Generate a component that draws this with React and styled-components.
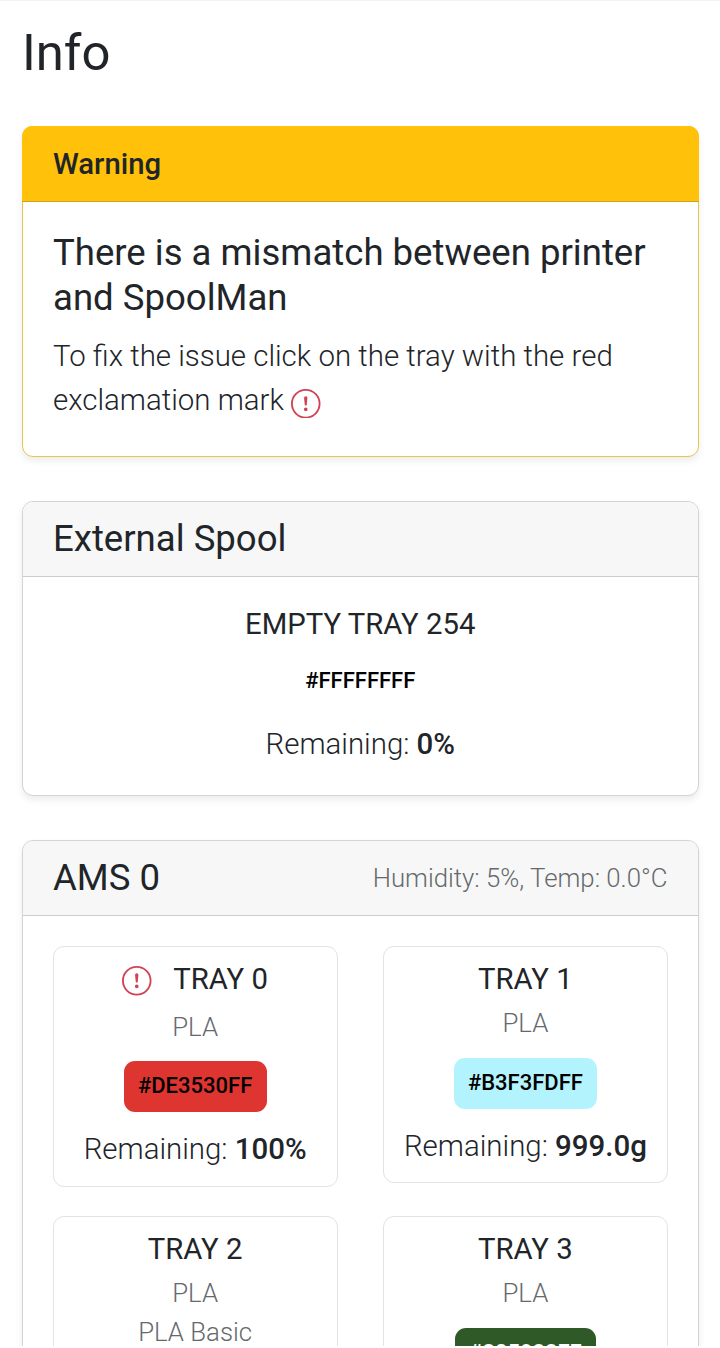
import React from "react";
import styled, { createGlobalStyle } from "styled-components";

const GlobalStyle = createGlobalStyle`
  *, *::before, *::after { box-sizing: border-box; }
  html, body { margin: 0; padding: 0; background: #fff; }
  body {
    font-family: Roboto, "Liberation Sans", sans-serif;
    font-size: 29.45px;
    font-weight: 300;
    line-height: 44px;
    color: #212529;
  }
`;

const Page = styled.main`
  height: 1346px;
  overflow: hidden;
  padding: 0 21.5px 0 22px;
  border-top: 1px solid #f8f1ee;
`;

const PageTitle = styled.h1`
  margin: 20.5px 0 42.5px;
  font-size: 50.8px;
  font-weight: 400;
  line-height: 62px;
`;

const Card = styled.section`
  margin-bottom: 44px;
  border: 1.5px solid ${(p) => (p.$warning ? "#e4c84c" : "#d2d3d4")};
  border-radius: 11px;
  box-shadow: 0 4px 7px rgba(0, 0, 0, 0.075);
  background: #fff;
`;

const CardHeader = styled.header`
  display: flex;
  align-items: center;
  justify-content: space-between;
  height: 75px;
  padding: 0 30px;
  border-bottom: 1px solid ${(p) => (p.$warning ? "#cda31b" : "#cbccce")};
  border-radius: 10px 10px 0 0;
  background: ${(p) => (p.$warning ? "#ffc10a" : "#f7f7f7")};
  ${(p) =>
    p.$warning &&
    `
    height: 76px;
    margin: -1px -1px 0;
    padding: 1px 31px 0;
    font-size: 29.3px;
    font-weight: 500;
  `}
`;

const CardTitle = styled.h5`
  margin: 0;
  font-size: 36.55px;
  font-weight: 400;
  line-height: 44.5px;
`;

const HeaderNote = styled.span`
  font-size: 25.75px;
  color: #66696c;
`;

const WarningBody = styled.div`
  height: 254px;
  padding: 29px 30px;
`;

const WarningText = styled.p`
  margin: 14px 0 0;
`;

const SpoolBody = styled.div`
  display: flex;
  flex-direction: column;
  align-items: center;
  height: 218px;
  padding-top: 29px;
`;

const TrayGrid = styled.div`
  display: grid;
  grid-template-columns: 1fr 1fr;
  align-items: start;
  gap: 29.4px 45px;
  padding: 30px 29.5px;
`;

const TrayCard = styled.article`
  display: flex;
  flex-direction: column;
  align-items: center;
  padding: 14px 0 ${(p) => (p.$flagged ? "15px" : "14px")};
  border: 1.5px solid #e2e3e4;
  border-radius: 11px;
`;

const TrayName = styled.h6`
  display: flex;
  align-items: flex-start;
  gap: 21.5px;
  height: ${(p) => (p.$flagged ? "40px" : "36px")};
  margin: 0 0 7px;
  font-size: 29.3px;
  font-weight: 400;
  line-height: 36px;

  svg { margin-top: 5px; }
`;

const Material = styled.span`
  font-size: 25.8px;
  line-height: 39px;
  color: #66696c;
`;

const ColorBadge = styled.span`
  height: 51px;
  margin: ${(p) => p.$margin || "15px 0 15px"};
  padding: 0 14.3px;
  border-radius: 11px;
  font-size: 22px;
  font-weight: 500;
  line-height: 50px;
  color: ${(p) => p.$color || "#000"};
  background: ${(p) => p.$bg};
`;

const Remaining = styled.span`
  white-space: nowrap;
  b { font-weight: 500; }
`;

const IconSvg = styled.svg`
  width: 29.5px;
  height: 29.5px;
  fill: #d04355;
  vertical-align: -8px;
`;

const AlertIcon = () => (
  <IconSvg viewBox="0 0 16 16" aria-hidden="true">
    <path d="M8 15A7 7 0 1 1 8 1a7 7 0 0 1 0 14m0 1A8 8 0 1 0 8 0a8 8 0 0 0 0 16" />
    <path d="M7.002 11a1 1 0 1 1 2 0 1 1 0 0 1-2 0M7.1 4.995a.905.905 0 1 1 1.8 0l-.35 3.507a.552.552 0 0 1-1.1 0z" />
  </IconSvg>
);

const trays = [
  { name: "TRAY 0", flagged: true, materials: ["PLA"], hex: "#DE3530FF", bg: "#de3530", left: "100%" },
  { name: "TRAY 1", materials: ["PLA"], hex: "#B3F3FDFF", bg: "#b3f3fd", left: "999.0g" },
  { name: "TRAY 2", materials: ["PLA", "PLA Basic"], hex: "#FFFFFFFF", bg: "#ffffff", left: "100%" },
  { name: "TRAY 3", materials: ["PLA"], hex: "#305928FF", bg: "#305928", color: "#fff", left: "100%" },
];

const Tray = ({ tray }) => (
  <TrayCard $flagged={tray.flagged}>
    <TrayName $flagged={tray.flagged}>
      {tray.flagged && <AlertIcon />}
      <span>{tray.name}</span>
    </TrayName>
    {tray.materials.map((m) => (
      <Material key={m}>{m}</Material>
    ))}
    <ColorBadge
      $bg={tray.bg}
      $color={tray.color}
      $margin={tray.flagged ? "14px 0 15px" : undefined}
    >
      {tray.hex}
    </ColorBadge>
    <Remaining>
      Remaining: <b>{tray.left}</b>
    </Remaining>
  </TrayCard>
);

export default function App() {
  return (
    <>
      <GlobalStyle />
      <Page>
        <PageTitle>Info</PageTitle>
        <Card $warning>
          <CardHeader $warning>Warning</CardHeader>
          <WarningBody>
            <CardTitle>There is a mismatch between printer and SpoolMan</CardTitle>
            <WarningText>
              To fix the issue click on the tray with the red exclamation mark <AlertIcon />
            </WarningText>
          </WarningBody>
        </Card>
        <Card>
          <CardHeader>
            <CardTitle>External Spool</CardTitle>
          </CardHeader>
          <SpoolBody>
            <TrayName>EMPTY TRAY 254</TrayName>
            <ColorBadge $bg="#fff" $margin="7px 0 15px">#FFFFFFFF</ColorBadge>
            <Remaining>
              Remaining: <b>0%</b>
            </Remaining>
          </SpoolBody>
        </Card>
        <Card>
          <CardHeader>
            <CardTitle>AMS 0</CardTitle>
            <HeaderNote>Humidity: 5%, Temp: 0.0°C</HeaderNote>
          </CardHeader>
          <TrayGrid>
            {trays.map((tray) => (
              <Tray key={tray.name} tray={tray} />
            ))}
          </TrayGrid>
        </Card>
      </Page>
    </>
  );
}
